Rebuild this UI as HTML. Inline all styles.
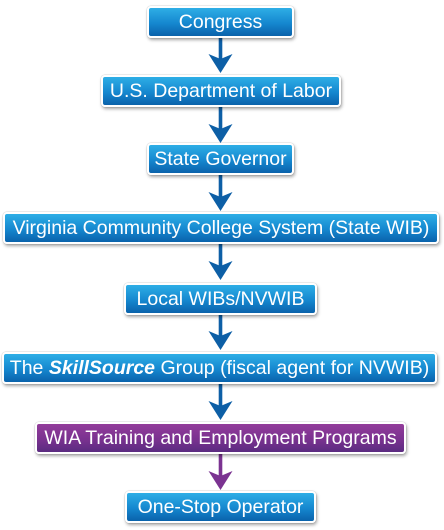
<!DOCTYPE html>
<html><head><meta charset="utf-8"><style>
html,body{margin:0;padding:0;background:#fff;width:444px;height:530px;overflow:hidden;position:relative;font-family:"Liberation Sans",sans-serif}
.b{position:absolute;box-sizing:border-box;height:32px;border:2px solid #fff;border-radius:4px;background:linear-gradient(#2eaee6,#1587cf 55%,#0a62ab);color:#fff;font-size:19.5px;line-height:28px;text-align:center;box-shadow:1px 2px 3px rgba(0,0,0,.35),0 0 1px rgba(0,0,0,.4);white-space:nowrap}
.p{background:linear-gradient(#923c9a,#7a3290 55%,#5a2b80)}
svg{position:absolute;left:0;top:0}
</style></head><body>
<svg width="444" height="530">
<defs>
<g id="a"><rect x="-1.8" y="0" width="3.6" height="26" /><path d="M-12,17 L0,22 L12,17 L0,36 Z"/></g>
</defs>
<g fill="#0d5fa6">
<use href="#a" x="220.5" y="37"/>
<use href="#a" x="220.5" y="107"/>
<use href="#a" x="220.5" y="175"/>
<use href="#a" x="220.5" y="244"/>
<use href="#a" x="220.5" y="314"/>
<use href="#a" x="220.5" y="384"/>
</g>
<g fill="#7b3391"><use href="#a" x="220.5" y="454"/></g>
</svg>
<div class="b" style="left:147px;top:6px;width:147px">Congress</div>
<div class="b" style="left:101px;top:75px;width:240px">U.S. Department of Labor</div>
<div class="b" style="left:147px;top:143px;width:147px">State Governor</div>
<div class="b" style="left:3px;top:212px;width:436px">Virginia Community College System (State WIB)</div>
<div class="b" style="left:124px;top:283px;width:193px">Local WIBs/NVWIB</div>
<div class="b" style="left:2px;top:352px;width:435px">The <b><i>SkillSource</i></b> Group (fiscal agent for NVWIB)</div>
<div class="b p" style="left:35px;top:422px;width:371px">WIA Training and Employment Programs</div>
<div class="b" style="left:125px;top:491px;width:191px">One-Stop Operator</div>
</body></html>
